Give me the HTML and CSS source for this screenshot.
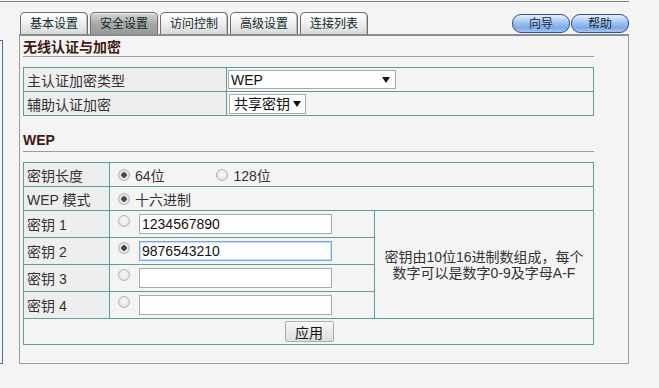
FILE: index.html
```html
<!DOCTYPE html>
<html lang="zh-CN">
<head>
    <meta charset="UTF-8">
    <title>无线安全设置</title>
    <link rel="stylesheet" href="styles.css">
</head>
<body>

<div class="topline"></div>
<div class="wrap">
    <div class="side"></div>
    <div class="main">
        <div class="head">
            <div class="tabs">
                <a class="tab">基本设置</a>
                <a class="tab active">安全设置</a>
                <a class="tab">访问控制</a>
                <a class="tab">高级设置</a>
                <a class="tab">连接列表</a>
            </div>
            <div class="btns">
                <a class="pill">向导</a>
                <a class="pill">帮助</a>
            </div>
        </div>

        <div class="panel">
            <div class="content">
                <h3 class="title">无线认证与加密</h3>
                <table class="grid grid1">
                    <tr>
                        <td class="lab">主认证加密类型</td>
                        <td>
                            <span class="sel sel1">
                                <select><option>WEP</option></select>
                            </span>
                        </td>
                    </tr>
                    <tr>
                        <td class="lab">辅助认证加密</td>
                        <td>
                            <span class="sel sel2">
                                <select><option>共享密钥</option></select>
                            </span>
                        </td>
                    </tr>
                </table>

                <h3 class="title sub">WEP</h3>
                <table class="grid grid2">
                    <tr class="r24">
                        <td class="lab c1">密钥长度</td>
                        <td colspan="2">
                            <label class="opt"><input type="radio" name="len" checked>64位</label>
                            <label class="opt wide"><input type="radio" name="len">128位</label>
                        </td>
                    </tr>
                    <tr class="r24">
                        <td class="lab">WEP 模式</td>
                        <td colspan="2">
                            <label class="opt"><input type="radio" name="mode" checked>十六进制</label>
                        </td>
                    </tr>
                    <tr class="r27">
                        <td class="lab">密钥 1</td>
                        <td class="c2"><input type="radio" name="key"><input type="text" class="key" value="1234567890"></td>
                        <td rowspan="4" class="note">密钥由10位16进制数组成，每个<br>数字可以是数字0-9及字母A-F</td>
                    </tr>
                    <tr class="r27">
                        <td class="lab">密钥 2</td>
                        <td class="c2"><input type="radio" name="key" checked><input type="text" class="key focus" value="9876543210"></td>
                    </tr>
                    <tr class="r27">
                        <td class="lab">密钥 3</td>
                        <td class="c2"><input type="radio" name="key"><input type="text" class="key" value=""></td>
                    </tr>
                    <tr class="r27">
                        <td class="lab">密钥 4</td>
                        <td class="c2"><input type="radio" name="key"><input type="text" class="key" value=""></td>
                    </tr>
                    <tr class="r26">
                        <td colspan="3" class="act"><button class="apply">应用</button></td>
                    </tr>
                </table>
            </div>
        </div>
    </div>
</div>

</body>
</html>
```

FILE: styles.css
```css
body {
    margin: 0;
    background: #f4f4f4;
    font-family: "Liberation Sans", "Noto Sans CJK SC", sans-serif;
    font-size: 14px;
    color: #333;
}
.topline {
    width: 629px;
    margin-top: 1px;
    border-top: 1px solid #808080;
}
.wrap {
    display: flex;
    align-items: flex-start;
}
.side {
    width: 2px;
    height: 322px;
    margin-top: 38px;
    border: 1px solid #4d6ea6;
    border-left: none;
}
.main {
    width: 610px;
    margin-left: 16px;
}
.head {
    display: flex;
    justify-content: space-between;
    align-items: flex-end;
    padding-top: 10px;
}
.tabs {
    display: flex;
    gap: 2px;
    padding-left: 1px;
}
.tab {
    width: 66px;
    height: 21px;
    line-height: 22px;
    text-align: center;
    font-size: 12px;
    color: #0d2b2b;
    border: 1px solid #6e6e6e;
    border-bottom: none;
    border-radius: 5px 5px 0 0;
    background: linear-gradient(#ffffff, #f2f2f2 45%, #d8d8d8);
    box-shadow: inset -1px 0 0 #bbb;
}
.tab.active {
    background: linear-gradient(#d6d6d6, #a6a6a6 55%, #9a9a9a);
    box-shadow: inset 0 1px 0 #eee;
}
.btns {
    display: flex;
    gap: 1px;
    padding-bottom: 1px;
}
.pill {
    width: 56px;
    height: 17px;
    line-height: 18px;
    text-align: center;
    font-size: 12px;
    color: #1a2a3a;
    border: 1px solid #2d4f9c;
    border-radius: 9px;
    background: linear-gradient(#e6f0fc, #a9c9f2 40%, #7ea9e6 75%, #a6c6f2);
}
.panel {
    border: 1px solid #9a9a9a;
    border-top: 2px solid #8c8c8c;
    height: 327px;
}
.content {
    width: 571px;
    margin-left: 3px;
}
.title {
    margin: 0;
    height: 20px;
    line-height: 22px;
    font-size: 14px;
    font-weight: bold;
    color: #3e1c12;
    border-bottom: 1px solid #9c9c9c;
}
.title.sub {
    margin-top: 15px;
    line-height: 19px;
}
.grid {
    width: 571px;
    margin-top: 10px;
    border-collapse: collapse;
}
.grid td {
    border: 1px solid #5a9e9e;
    padding: 0;
    vertical-align: middle;
}
.grid1 tr {
    height: 24px;
}
.grid1 .lab {
    width: 199px;
}
.lab {
    background: #eeeeee;
    padding-left: 3px !important;
    white-space: nowrap;
}
.grid2 .c1 {
    width: 82px;
}
.grid2 .c2 {
    width: 264px;
    white-space: nowrap;
}
.r24 {
    height: 24px;
}
.r27 {
    height: 27px;
}
.r26 {
    height: 26px;
}
.sel {
    position: relative;
    display: inline-block;
    vertical-align: middle;
    margin-left: 1px;
}
.sel select {
    appearance: none;
    -webkit-appearance: none;
    display: block;
    height: 19px;
    border: 1px solid #a9a9a9;
    border-radius: 0;
    background: #fff;
    font: 14px "Liberation Sans", "Noto Sans CJK SC", sans-serif;
    color: #111;
    padding: 0 0 0 2px;
    outline: none;
}
.sel1 select {
    width: 168px;
}
.sel2 {
    margin-left: 2px;
}
.sel2 select {
    width: 77px;
    height: 20px;
    padding-left: 4px;
}
.sel::after {
    content: "";
    position: absolute;
    right: 6px;
    top: 7px;
    border-left: 4px solid transparent;
    border-right: 4px solid transparent;
    border-top: 6px solid #111;
}
.sel2::after {
    right: 5px;
}
.opt {
    display: inline-flex;
    align-items: center;
    margin-left: 8px;
    color: #333;
}
.opt.wide {
    margin-left: 48px;
}
input[type="radio"] {
    appearance: none;
    -webkit-appearance: none;
    width: 12px;
    height: 12px;
    margin: 0 5px 0 0;
    border: 1px solid #b4b4b4;
    border-radius: 50%;
    background: radial-gradient(circle at 50% 40%, #fafafa, #dcdcdc);
    box-sizing: border-box;
}
input[type="radio"]:checked {
    background: radial-gradient(circle, #4a4a4a 0, #4a4a4a 2.5px, #e8e8e8 3px, #d8d8d8);
}
.c2 input[type="radio"] {
    margin-left: 8px;
    margin-right: 9px;
    vertical-align: middle;
    position: relative;
    top: -3px;
}
.key {
    width: 193px;
    height: 20px;
    box-sizing: border-box;
    border: 1px solid #a9a9a9;
    padding: 0 2px;
    font: 14px "Liberation Sans", sans-serif;
    color: #111;
    background: #fff;
    vertical-align: middle;
    outline: none;
}
.key.focus {
    border-color: #7aa5e6;
    box-shadow: inset 0 0 0 1px #c6dbf7;
}
.note {
    text-align: center;
    line-height: 16px;
    color: #333;
    padding: 0 4px !important;
}
.act {
    text-align: center;
}
.apply {
    width: 49px;
    height: 21px;
    padding: 0;
    border: 1px solid #adadad;
    border-radius: 2px;
    background: linear-gradient(#f6f6f6, #dedede);
    font: 14px "Liberation Sans", "Noto Sans CJK SC", sans-serif;
    color: #111;
    margin-left: 1px;
}
```
